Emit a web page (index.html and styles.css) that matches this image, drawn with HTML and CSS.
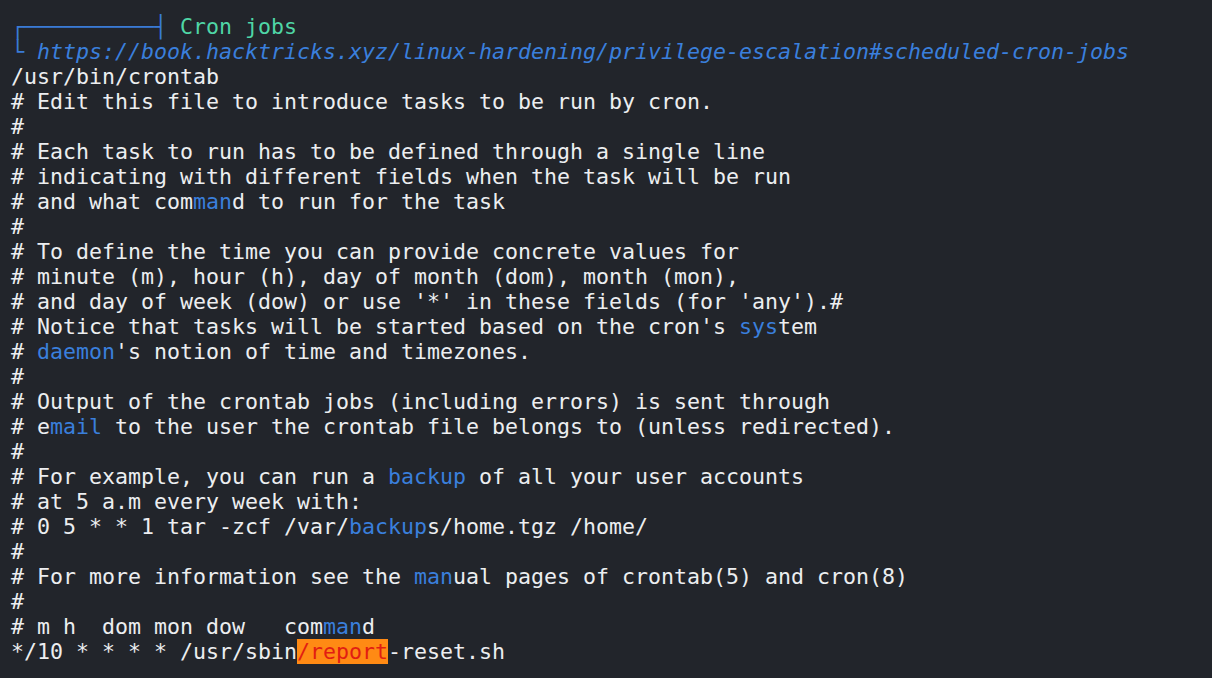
FILE: index.html
```html
<!DOCTYPE html>
<html>
<head>
<meta charset="utf-8">
<link rel="stylesheet" href="styles.css">
</head>
<body>
<pre class="term"><span class="box">┌──────────┤</span> <span class="title">Cron jobs</span>
<span class="box">└</span> <span class="url">https://book.hacktricks.xyz/linux-hardening/privilege-escalation#scheduled-cron-jobs</span>
/usr/bin/crontab
# Edit this file to introduce tasks to be run by cron.
#
# Each task to run has to be defined through a single line
# indicating with different fields when the task will be run
# and what com<span class="hl">man</span>d to run for the task
#
# To define the time you can provide concrete values for
# minute (m), hour (h), day of month (dom), month (mon),
# and day of week (dow) or use '*' in these fields (for 'any').#
# Notice that tasks will be started based on the cron's <span class="hl">sys</span>tem
# <span class="hl">daemon</span>'s notion of time and timezones.
#
# Output of the crontab jobs (including errors) is sent through
# e<span class="hl">mail</span> to the user the crontab file belongs to (unless redirected).
#
# For example, you can run a <span class="hl">backup</span> of all your user accounts
# at 5 a.m every week with:
# 0 5 * * 1 tar -zcf /var/<span class="hl">backup</span>s/home.tgz /home/
#
# For more information see the <span class="hl">man</span>ual pages of crontab(5) and cron(8)
#
# m h  dom mon dow   com<span class="hl">man</span>d
*/10 * * * * /usr/sbin<span class="alert">/report</span>-reset.sh</pre>
</body>
</html>
```

FILE: styles.css
```css
html, body {
  margin: 0;
  padding: 0;
  background: #22252b;
}
body {
  width: 1212px;
  height: 678px;
  overflow: hidden;
}
.term {
  margin: 0;
  padding: 14px 0 0 11px;
  font-family: "DejaVu Sans Mono", "Liberation Mono", monospace;
  font-size: 21.6px;
  line-height: 25px;
  color: #eceef0;
  white-space: pre;
}
.box {
  color: #3a7bd5;
}
.title {
  color: #4fd6a6;
}
.url {
  color: #3a7fdc;
  font-style: italic;
}
.hl {
  color: #3a7fdc;
}
.alert {
  background: #ff8a14;
  color: #e21d12;
}
```
